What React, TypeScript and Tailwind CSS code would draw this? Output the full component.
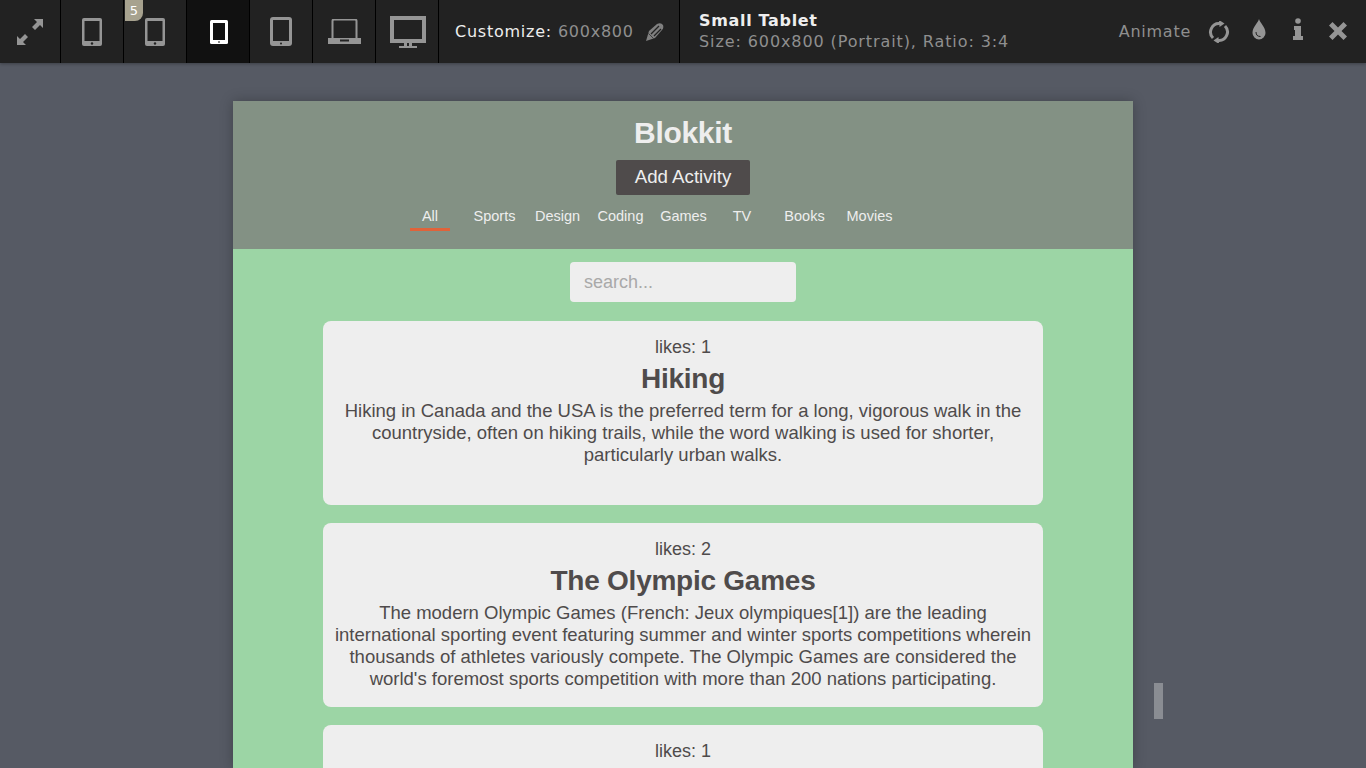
import { ReactNode } from 'react';

const sans = 'font-["Liberation_Sans",Arial,sans-serif]';

function TabletIcon({ h = 28, color = '#959595' }: { h?: number; color?: string }) {
  return (
    <svg width="20" height={h} viewBox="0 0 20 28">
      <rect x="0" y="0" width="20" height="28" rx="2" fill={color} />
      <rect x="2.5" y="3" width="15" height="20" fill="#222222" />
      <circle cx="10" cy="25.5" r="1.2" fill="#222222" />
    </svg>
  );
}

function ActiveTablet() {
  return (
    <svg className="translate-x-px" width="18" height="24" viewBox="0 0 18 24">
      <rect x="0" y="0" width="18" height="24" rx="1.5" fill="#ffffff" />
      <rect x="3" y="3" width="12" height="17" fill="#111111" />
      <rect x="8" y="21.5" width="2" height="1" fill="#111111" />
    </svg>
  );
}

function LargeTablet() {
  return (
    <svg width="22" height="29" viewBox="0 0 22 29">
      <rect x="0" y="0" width="22" height="29" rx="3" fill="#959595" />
      <rect x="3" y="3" width="16" height="21" fill="#222222" />
      <circle cx="11" cy="26.5" r="1" fill="#222222" />
    </svg>
  );
}

function LaptopIcon() {
  return (
    <svg width="33" height="25" viewBox="0 0 33 25">
      <path d="M4.5 19V2a1.5 1.5 0 0 1 1.5-1.5h21A1.5 1.5 0 0 1 28.5 2v17" fill="none" stroke="#959595" strokeWidth="2" />
      <path d="M0 19h33v6H0z" fill="#959595" />
      <rect x="12" y="20.5" width="9" height="2" fill="#222222" />
    </svg>
  );
}

function DesktopIcon() {
  return (
    <svg className="translate-x-px" width="36" height="32" viewBox="0 0 36 32">
      <path fillRule="evenodd" d="M0 0h36v27H0zM4 4v19h28V4z" fill="#959595" />
      <rect x="14" y="27" width="3" height="3" fill="#959595" />
      <rect x="19" y="27" width="3" height="3" fill="#959595" />
      <rect x="9" y="30" width="18" height="2" fill="#959595" />
    </svg>
  );
}

function ExpandIcon() {
  return (
    <svg width="26" height="26" viewBox="0 0 26 26" fill="#959595">
      <path d="M26 0v9l-3-3-5 5-3-3 5-5-3-3z" />
      <path d="M0 26v-9l3 3 5-5 3 3-5 5 3 3z" />
    </svg>
  );
}

function ToolbarCell({ active, first, children }: { active?: boolean; first?: boolean; children: ReactNode }) {
  return (
    <div
      className={`relative flex h-full shrink-0 items-center justify-center border-r border-black ${
        first ? 'w-[61px]' : 'w-[63px]'
      } ${active ? 'bg-[#111111]' : ''}`}
    >
      {children}
    </div>
  );
}

function ActivityCard({ likes, title, children }: { likes: number; title: string; children?: ReactNode }) {
  return (
    <div className={`flex h-[184px] w-[720px] shrink-0 flex-col items-center rounded-lg bg-[#eeeeee] px-2.5 pt-[15px] text-center text-[#4f4b4b] ${sans}`}>
      <p className="text-[18px] leading-[22px]">likes: {likes}</p>
      <h2 className="mt-[5px] text-[28px] font-bold leading-[32px] tracking-[-0.25px]">{title}</h2>
      <p className="mt-[5px] text-[18.5px] leading-[22px]">{children}</p>
    </div>
  );
}

const tabs = [
  ['All', 'w-[64px] pr-[2px]'],
  ['Sports', 'w-[63px]'],
  ['Design', 'w-[63px]'],
  ['Coding', 'w-[63px]'],
  ['Games', 'w-[63px]'],
  ['TV', 'w-[54px]'],
  ['Books', 'ml-[4px] w-[63px]'],
  ['Movies', 'w-[67px]'],
];

export default function App() {
  return (
    <div className="relative flex h-[768px] w-[1366px] flex-col overflow-hidden bg-[#565a64]">
      <header className='z-10 flex h-[63px] shrink-0 items-center bg-[#222222] font-["DejaVu_Sans",sans-serif] shadow-[0_1px_3px_rgba(0,0,0,0.3)]'>
        <ToolbarCell first><ExpandIcon /></ToolbarCell>
        <ToolbarCell><TabletIcon /></ToolbarCell>
        <ToolbarCell>
          <span className="absolute left-px top-0 flex h-[21px] w-[18px] items-center justify-center rounded-br-lg bg-[#a7a28f] text-[13px] text-white">5</span>
          <TabletIcon />
        </ToolbarCell>
        <ToolbarCell active><ActiveTablet /></ToolbarCell>
        <ToolbarCell><LargeTablet /></ToolbarCell>
        <ToolbarCell><LaptopIcon /></ToolbarCell>
        <ToolbarCell><DesktopIcon /></ToolbarCell>
        <div className="flex h-full w-[241px] shrink-0 items-center border-r border-black pl-[16px] text-[16px] tracking-[0.75px]">
          <span className="text-[#eeeeee]">Customize:</span>
          <span className="ml-[6px] text-[#8f8f8f]">600x800</span>
          <svg className="ml-[12px]" width="18" height="18" viewBox="0 0 18 18">
            <path d="M0 18L3 8l8-7q4-2 6 1 1 3-1 5l-7 8z" fill="#808080" />
            <path d="M5 11l8-8M8 13l7-7" fill="none" stroke="#222222" strokeWidth="1.3" />
            <path d="M2.5 10.5l5 5" fill="none" stroke="#222222" strokeWidth="0.7" />
          </svg>
        </div>
        <div className="ml-[19px] flex flex-col">
          <span className="text-[16px] font-bold leading-[20px] tracking-[0.67px] text-[#eeeeee]">Small Tablet</span>
          <span className="text-[16px] leading-[22px] tracking-[0.9px] text-[#8f8f8f]">Size: 600x800 (Portrait), Ratio: 3:4</span>
        </div>
        <div className="ml-auto flex items-center pr-[19px]">
          <span className="text-[16px] tracking-[0.75px] text-[#8f8f8f]">Animate</span>
          <svg className="ml-[17px]" width="22" height="22" viewBox="0 0 22 22" fill="none" stroke="#959595" strokeWidth="3">
            <path d="M5 17A8.5 8.5 0 0 1 12 2.6" />
            <path d="M17 5A8.5 8.5 0 0 1 10 19.4" />
            <path d="M11 -1l5.5 3.5-5 3.5z" fill="#959595" stroke="none" />
            <path d="M11 23l-5.5-3.5 5-3.5z" fill="#959595" stroke="none" />
          </svg>
          <svg className="ml-[22px] -translate-y-[2px]" width="14" height="22" viewBox="0 0 14 22">
            <path d="M7 0c1 4 6.5 8 6.5 14a6.5 6.5 0 0 1-13 0C.5 8 6 4 7 0z" fill="#959595" />
            <path d="M4 13c0 3 1.5 4.500 4.500 4.500" fill="none" stroke="#222222" strokeWidth="1" />
          </svg>
          <svg className="ml-[26px] -translate-y-[3px]" width="12" height="22" viewBox="0 0 12 22" fill="#959595">
            <circle cx="6" cy="3" r="2.8" />
            <path d="M2 8h7v10h2v4H1v-4h2v-6H2z" />
          </svg>
          <svg className="ml-[25px] -translate-y-px" width="18" height="18" viewBox="0 0 18 18" fill="#959595">
            <path d="M3.500 0L9 5.500 14.500 0 18 3.500 12.500 9 18 14.500 14.500 18 9 12.500 3.500 18 0 14.500 5.500 9 0 3.500z" />
          </svg>
        </div>
      </header>

      <div className="flex min-h-0 flex-1 justify-center pt-[38px]">
        <main className="flex w-[900px] flex-col shadow-[0_0_12px_rgba(0,0,0,0.25)]">
          <div className={`flex h-[148px] shrink-0 flex-col items-center bg-[#839184] ${sans}`}>
            <h1 className="mt-[14px] text-[30px] font-bold leading-[36px] tracking-[-0.3px] text-[#eeeeee]">Blokkit</h1>
            <button className="mt-[9px] h-[35px] w-[134px] rounded-[2px] bg-[#4f4b4b] text-[18.7px] text-[#eeeeee]">Add Activity</button>
            <nav className="mr-[64px] mt-[9px] flex items-start">
              {tabs.map(([label, width]) => (
                <div key={label} className={`flex flex-col items-center ${width}`}>
                  <span className="text-[14.5px] leading-[24px] text-[#eeeeee]">{label}</span>
                  {label === 'All' && <span className="h-[3px] w-[40px] bg-[#e0633a]" />}
                </div>
              ))}
            </nav>
          </div>
          <div className="flex min-h-0 flex-1 flex-col items-center gap-[18px] overflow-hidden bg-[#9cd5a5] pt-[13px]">
            <input
              placeholder="search..."
              className={`mb-px h-[40px] w-[226px] shrink-0 rounded bg-[#eeeeee] px-[14px] text-[18px] outline-none placeholder:text-[#a9a9a9] ${sans}`}
            />
            <ActivityCard likes={1} title="Hiking">
              Hiking in Canada and the USA is the preferred term for a long, vigorous walk in the countryside, often on hiking trails, while the word walking is used for shorter, particularly urban walks.
            </ActivityCard>
            <ActivityCard likes={2} title="The Olympic Games">
              The modern Olympic Games (French: Jeux olympiques[1]) are the leading international sporting event featuring summer and winter sports competitions wherein thousands of athletes variously compete. The Olympic Games are considered the world's foremost sports competition with more than 200 nations participating.
            </ActivityCard>
            <ActivityCard likes={1} title="" />
          </div>
        </main>
        <div className="relative w-0">
          <span className="absolute left-[21px] top-[582px] h-[36px] w-[9px] bg-[#8a8d93]" />
        </div>
      </div>
    </div>
  );
}
